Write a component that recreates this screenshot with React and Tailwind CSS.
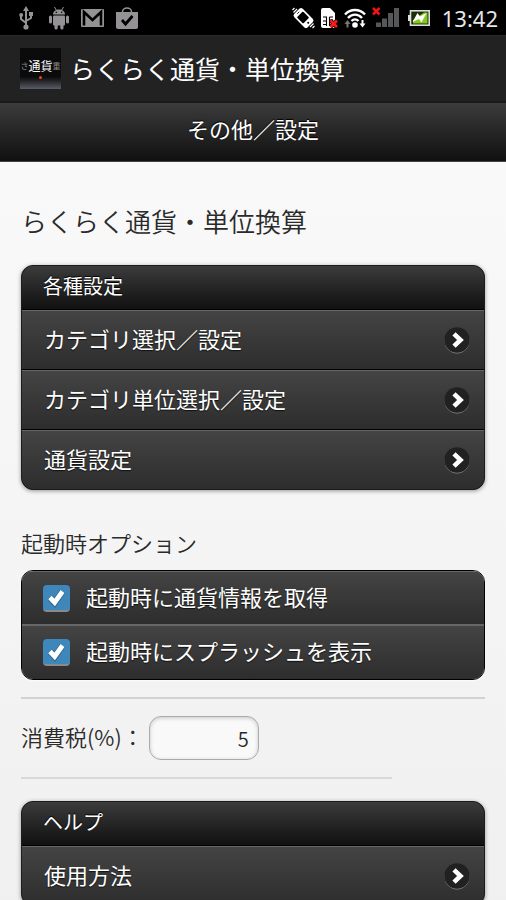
import { useState } from "react";

const SETTINGS = ["カテゴリ選択／設定", "カテゴリ単位選択／設定", "通貨設定"];
const HELP = ["使用方法"];

function UsbIcon() {
  return (
    <svg width="14" height="24" viewBox="0 0 14 24" fill="none" stroke="#949294" strokeWidth="2">
      <path d="M7 4v17M2 9v4l5 4M12 8v4l-5 3" />
      <path d="M7 0l3 5H4z" fill="#949294" stroke="none" />
      <circle cx="7" cy="21" r="2.6" fill="#949294" stroke="none" />
      <circle cx="2.2" cy="9" r="2" fill="#949294" stroke="none" />
      <path d="M10 6h4v4h-4z" fill="#949294" stroke="none" />
    </svg>
  );
}

function AndroidIcon() {
  return (
    <svg width="20" height="24" viewBox="0 0 20 24" fill="#949294">
      <path d="M4 8.5C4 5.500 6.500 3.500 10 3.500s6 2 6 5z" />
      <path d="M5.500 1l2 3.500M14.500 1l-2 3.500" stroke="#949294" strokeWidth="1" />
      <rect x="4" y="9.500" width="12" height="10" rx="1" />
      <rect x="0" y="9.500" width="3" height="8" rx="1.500" />
      <rect x="17" y="9.500" width="3" height="8" rx="1.500" />
      <rect x="5.500" y="17" width="3.200" height="6.500" rx="1.500" />
      <rect x="11.300" y="17" width="3.200" height="6.500" rx="1.500" />
      <circle cx="7.300" cy="6.300" r="0.800" fill="#000" />
      <circle cx="12.700" cy="6.300" r="0.800" fill="#000" />
    </svg>
  );
}

function MailIcon() {
  return (
    <svg width="23" height="18" viewBox="0 0 23 18">
      <rect width="23" height="18" rx="1" fill="#949294" />
      <path d="M3 16.500V3l8.500 8L20 3v13.500" fill="none" stroke="#000" strokeWidth="2.600" />
    </svg>
  );
}

function BagIcon() {
  return (
    <svg width="22" height="22" viewBox="0 0 22 22">
      <path d="M6.500 6V5a4.500 4 0 0 1 9 0v1" fill="none" stroke="#949294" strokeWidth="1.500" />
      <path d="M0 5h22v15a2 2 0 0 1-2 2H2a2 2 0 0 1-2-2z" fill="#949294" />
      <path d="M6 13l3.500 4 7-8" fill="none" stroke="#000" strokeWidth="2.800" />
    </svg>
  );
}

function VibrateIcon() {
  return (
    <svg width="23" height="22" viewBox="0 0 23 22" fill="none" stroke="#fff">
      <g transform="rotate(-45 11.500 11)">
        <rect x="5.500" y="1.500" width="12" height="19" rx="2.500" fill="#fff" stroke="none" />
        <rect x="7.200" y="5.800" width="8.600" height="9" rx="1" fill="#000" stroke="none" />
        <circle cx="11.500" cy="17.700" r="1" fill="#000" stroke="none" />
        <path d="M10 3.600h3" stroke="#000" strokeWidth="0.800" />
      </g>
      <path d="M1.500 5.500l3.500-3.500M0.500 3l2-2M21.500 16.500L18 20M22.500 19l-2 2" strokeWidth="1.200" />
    </svg>
  );
}

function SimIcon() {
  return (
    <svg width="17" height="20" viewBox="0 0 17 20">
      <path d="M0 2a2 2 0 0 1 2-2h7l5 5v13a2 2 0 0 1-2 2H2a2 2 0 0 1-2-2z" fill="#fff" />
      <path d="M2 13h3.500M2 16.500h3.500M2 9h3.500v9M8.500 9v9M8.500 9h3.500M8.500 12h3.500" fill="none" stroke="#000" strokeWidth="1.100" />
      <path d="M9.500 12.500l6.500 6.500M16 12.500L9.500 19" stroke="#000" strokeWidth="4" />
      <path d="M9.500 12.500l6.500 6.500M16 12.500L9.500 19" stroke="#ff1a1a" strokeWidth="2.600" />
    </svg>
  );
}

function WifiIcon() {
  return (
    <svg width="22" height="20" viewBox="0 0 22 20" fill="none" stroke="#fff" strokeWidth="2.400">
      <path d="M1 6.500c5.500-6 14.500-6 20 0M4 10c4-4.500 10-4.500 14 0M7.500 13c2-2 5-2 7 0" />
      <circle cx="11" cy="17" r="2.800" fill="#fff" stroke="none" />
      <path d="M3.500 12l3 4h-2v3.500h-2V16h-2z" fill="#777" stroke="none" />
      <path d="M18.500 19.500l-3-4h2V12h2v3.500h2z" fill="#fff" stroke="none" />
    </svg>
  );
}

function SignalIcon() {
  return (
    <svg width="27" height="21" viewBox="0 0 27 21">
      <path d="M4 15.500h5v4.500H4zM10 11.500h5v8.500h-5zM16 6h5v14h-5zM22 1h5v19h-5z" fill="#555759" />
      <path d="M1 1l6.500 6.500M7.500 1L1 7.500" stroke="#f21414" strokeWidth="2.500" />
    </svg>
  );
}

function BatteryIcon() {
  return (
    <svg width="22" height="16" viewBox="0 0 22 16">
      <rect x="0" y="5" width="2" height="6" fill="#ddd" />
      <rect x="2.500" y="0.800" width="18.700" height="14.400" fill="#1c2b08" stroke="#ddd" strokeWidth="1.600" />
      <path d="M5 13.500V10L16 2.500h3.500v11z" fill="#82c81f" />
      <path d="M4.500 12l5-9 2.500 3.500 6.500-3.500-5 9.500L11 9z" fill="#fff" />
    </svg>
  );
}

function StatusBar() {
  return (
    <div className="flex h-9 shrink-0 items-center border-b border-[#2a2a2a] bg-black pr-2 pl-[19px] text-white">
      <div className="flex items-center gap-3">
        <UsbIcon />
        <span className="pl-1">
          <AndroidIcon />
        </span>
        <MailIcon />
        <BagIcon />
      </div>
      <div className="ml-auto flex items-center gap-[6px]">
        <VibrateIcon />
        <SimIcon />
        <WifiIcon />
        <SignalIcon />
        <span className="px-[3px]">
          <BatteryIcon />
        </span>
        <time className="pl-[3px] font-['Noto_Sans'] text-[22px] leading-8 text-[#e6e6e6]">13:42</time>
      </div>
    </div>
  );
}

function AppIcon() {
  return (
    <div className="flex size-[41px] flex-col items-center bg-linear-to-b from-[#0c0b0c] from-70% to-[#5a5d68] pt-2">
      <div className="flex items-center whitespace-nowrap">
        <span className="text-[8px] leading-5 text-[#888]">さ</span>
        <span className="text-[12px] leading-5 text-white">通貨</span>
        <span className="text-[8px] leading-5 text-[#888]">重</span>
      </div>
      <span className="size-[3px] rounded-full bg-[#e8432a]" />
    </div>
  );
}

function ArrowBadge() {
  return (
    <svg width="26" height="27" viewBox="0 0 26 27" className="shrink-0">
      <circle cx="13" cy="14" r="12.500" fill="#8a8a8a" />
      <circle cx="13" cy="13" r="12.700" fill="#212121" />
      <path d="M10 6.800l6.500 6.200-6.500 6.200" fill="none" stroke="#fff" strokeWidth="4.600" />
    </svg>
  );
}

function MenuList({ title, items }) {
  return (
    <section className="overflow-hidden rounded-xl border border-[#1c1c1c] bg-black shadow-[0_1px_4px_rgba(0,0,0,0.4)]">
      <h3 className="bg-linear-to-b from-[#3c3c3c] to-[#111] px-[21px] pb-[3px] text-[20px] leading-10 text-white text-shadow-[0_-1px_1px_#000]">
        {title}
      </h3>
      <ul>
        {items.map((item) => (
          <li key={item} className="border-t border-black">
            <a
              href="#"
              className="flex h-[59px] items-center justify-between border-t border-[#666] bg-linear-to-b from-[#444] to-[#2d2d2d] pr-[14px] pl-[22px] text-[22px] text-white text-shadow-[0_1px_1px_#111]"
            >
              <span className="pb-1">{item}</span>
              <ArrowBadge />
            </a>
          </li>
        ))}
      </ul>
    </section>
  );
}

function CheckRow({ label, checked, onChange }) {
  return (
    <label className="flex h-[54px] items-center gap-4 border-t border-[#666] bg-linear-to-b from-[#444] to-[#2d2d2d] px-[21px] text-[22px] text-white text-shadow-[0_1px_1px_#111]">
      <span className="relative flex">
        <input
          type="checkbox"
          checked={checked}
          onChange={(event) => onChange(event.target.checked)}
          className="peer size-[27px] appearance-none rounded-[4px] border-b-2 border-[#8a8a8a] bg-[#222] checked:bg-[#3e87ba]"
        />
        <svg
          width="27"
          height="26"
          viewBox="0 0 27 26"
          className="pointer-events-none absolute inset-0 hidden peer-checked:block"
        >
          <path d="M7 12.500l4.700 5.200L19.500 6.500" fill="none" stroke="#1f4a68" strokeOpacity="0.500" strokeWidth="6.500" />
          <path d="M7 12.500l4.700 5L19.500 6.500" fill="none" stroke="#fff" strokeWidth="4.800" />
        </svg>
      </span>
      <span className="pb-1">{label}</span>
    </label>
  );
}

function App() {
  const [fetchRates, setFetchRates] = useState(true);
  const [showSplash, setShowSplash] = useState(true);
  const [tax, setTax] = useState("5");

  return (
    <div className="flex h-screen flex-col bg-[#f4f4f4] font-['Noto_Sans_CJK_JP',sans-serif] text-[#2a2a2a]">
      <StatusBar />
      <header className="shrink-0">
        <div className="flex h-[67px] items-center gap-[9px] border-b-2 border-[#191919] bg-[#222] px-5">
          <AppIcon />
          <h1 className="text-[25px] text-white">らくらく通貨・単位換算</h1>
        </div>
        <div className="h-[59px] border-b border-[#444] bg-linear-to-b from-[#3c3c3c] to-[#111] text-center text-[22px] leading-[50px] text-white text-shadow-[0_-1px_1px_#000]">
          その他／設定
        </div>
      </header>

      <main className="min-h-0 flex-1 overflow-y-auto bg-linear-to-b from-[#f9f9f9] to-[#f0f0f0] px-[21px] pt-[39px] pb-5 [scrollbar-width:none]">
        <h2 className="mb-6 text-[26px] leading-10 font-[350]">らくらく通貨・単位換算</h2>
        <MenuList title="各種設定" items={SETTINGS} />

        <fieldset className="mt-[34px]">
          <legend className="pb-[10px] text-[22px] leading-9 font-[350]">起動時オプション</legend>
          <div className="divide-y divide-black overflow-hidden rounded-xl border border-black shadow-[0_1px_2px_rgba(255,255,255,0.8)]">
            <CheckRow label="起動時に通貨情報を取得" checked={fetchRates} onChange={setFetchRates} />
            <CheckRow label="起動時にスプラッシュを表示" checked={showSplash} onChange={setShowSplash} />
          </div>
        </fieldset>

        <hr className="mt-[17px] border-t-2 border-[#d2d2d2]" />
        <div className="my-[17px] flex items-center gap-[5px]">
          <label htmlFor="tax" className="pb-1 text-[22px] leading-8 font-[350]">
            消費税(%)：
          </label>
          <input
            id="tax"
            type="text"
            inputMode="decimal"
            value={tax}
            onChange={(event) => setTax(event.target.value)}
            className="h-11 w-[110px] rounded-xl border border-[#aaa] bg-[#f9f9f9] px-[9px] text-right text-[20px] font-[350] shadow-[inset_0_1px_4px_rgba(0,0,0,0.2)]"
          />
        </div>
        <hr className="mb-[22px] w-4/5 border-t-2 border-[#d9d9d9]" />

        <MenuList title="ヘルプ" items={HELP} />
      </main>
    </div>
  );
}

export default App;
